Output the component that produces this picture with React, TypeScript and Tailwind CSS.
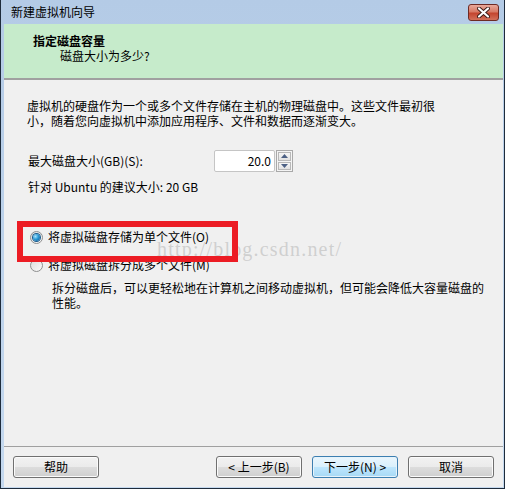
import React from "react";

const cjk = { fontFamily: '"Noto Sans CJK SC", "Liberation Sans", sans-serif' };

const Radio = ({ checked }: { checked?: boolean }) => (
  <span className="relative inline-flex h-[13px] w-[13px] shrink-0 items-center justify-center rounded-full border border-[#8e8f8f] bg-gradient-to-br from-[#dcdcdc] to-[#fbfbfb]">
    {checked && (
      <span className="h-[7px] w-[7px] rounded-full bg-[radial-gradient(circle_at_35%_35%,#a9e3fb_0%,#2a9ad6_45%,#0d4f8a_100%)] shadow-[0_0_0_1px_#1a5a8c]" />
    )}
  </span>
);

const Btn = ({ label, primary }: { label: string; primary?: boolean }) => (
  <button
    className={
      "flex h-[22px] w-[86px] items-center justify-center rounded-[3px] border text-[12px] leading-none text-black " +
      (primary
        ? "border-[#3c7fb1] bg-[linear-gradient(#eaf6fd_0%,#d9f0fc_50%,#bee6fd_50%,#a7d9f5_100%)] shadow-[inset_0_0_0_1px_#e6f3fb]"
        : "border-[#707070] bg-[linear-gradient(#f2f2f2_0%,#ebebeb_50%,#dddddd_50%,#cfcfcf_100%)] shadow-[inset_0_0_0_1px_#fbfbfb]")
    }
    style={cjk}
  >
    {label}
  </button>
);

export default function App() {
  return (
    <div className="w-[505px] h-[489px] overflow-hidden bg-[#1e2c3c] pl-px pr-px pb-px">
      <div className="flex h-full flex-col bg-[linear-gradient(#b4cbe6,#c5d9ef)] pl-[3px] pr-px pb-px">
        {/* title bar */}
        <div className="relative flex h-[24px] shrink-0 items-center pl-[7px]">
          <span className="text-[12px] leading-none text-black" style={cjk}>
            新建虚拟机向导
          </span>
          <div className="absolute right-[4px] top-[4px] flex h-[17px] w-[31px] items-center justify-center rounded-[3px] border border-[#6e2a24] bg-[linear-gradient(#e9a99b_0%,#d77a66_45%,#c4452f_55%,#d2705a_100%)]">
            <svg width="13" height="11" viewBox="0 0 13 11">
              <path d="M2 1.5 L11 9.5 M11 1.5 L2 9.5" stroke="#3a1a16" strokeWidth="4" strokeLinecap="round" />
              <path d="M2 1.5 L11 9.5 M11 1.5 L2 9.5" stroke="#ffffff" strokeWidth="2.2" strokeLinecap="round" />
            </svg>
          </div>
        </div>

        {/* client area */}
        <div className="flex flex-1 flex-col bg-[#f0f0f0] text-black" style={cjk}>
          <div className="h-[56px] shrink-0 border-b-2 border-[#a0a0a0] bg-[#c6ebcb] pl-[29px] pt-[9px]">
            <div className="text-[12px] font-bold leading-[15px]">指定磁盘容量</div>
            <div className="pl-[27px] text-[12px] leading-[15px]">磁盘大小为多少?</div>
          </div>

          <div className="relative flex flex-1 flex-col pl-[23px]">
            <div className="pt-[18px] text-[12px] leading-[15px]">
              <div>虚拟机的硬盘作为一个或多个文件存储在主机的物理磁盘中。这些文件最初很</div>
              <div>小，随着您向虚拟机中添加应用程序、文件和数据而逐渐变大。</div>
            </div>

            <div className="mt-[22px] flex h-[22px] items-center">
              <span className="w-[187px] pl-px text-[12px] leading-none">最大磁盘大小(GB)(S):</span>
              <div className="flex h-[22px] w-[61px] items-center justify-end rounded-[2px] border border-[#c5c5c5] bg-white pr-[3px] text-[12px]">
                20.0
              </div>
              <div className="ml-[1px] flex h-[22px] w-[17px] flex-col gap-px border border-[#a9a9a9] bg-[#f4f4f4] p-px">
                <div className="flex flex-1 items-center justify-center border border-[#b8b8b8] bg-[linear-gradient(#f6f6f6,#e2e2e2)]">
                  <svg width="7" height="4" viewBox="0 0 7 4"><path d="M0 4 L3.5 0 L7 4 Z" fill="#4d6185" /></svg>
                </div>
                <div className="flex flex-1 items-center justify-center border border-[#b8b8b8] bg-[linear-gradient(#f6f6f6,#e2e2e2)]">
                  <svg width="7" height="4" viewBox="0 0 7 4"><path d="M0 0 L3.5 4 L7 0 Z" fill="#4d6185" /></svg>
                </div>
              </div>
            </div>

            <div className="mt-[7px] pl-px text-[12px] leading-[15px]">针对 Ubuntu 的建议大小: 20 GB</div>

            <div className="mt-[35px] flex h-[16px] items-center gap-[5px] pl-[3px] text-[12px] leading-none">
              <Radio checked />
              <span>将虚拟磁盘存储为单个文件(O)</span>
            </div>
            <div className="mt-[12px] flex h-[16px] items-center gap-[5px] pl-[3px] text-[12px] leading-none">
              <Radio />
              <span>将虚拟磁盘拆分成多个文件(M)</span>
            </div>
            <div className="mt-[7px] pl-[25px] text-[12px] leading-[15px]">
              <div>拆分磁盘后，可以更轻松地在计算机之间移动虚拟机，但可能会降低大容量磁盘的</div>
              <div>性能。</div>
            </div>

            {/* watermark + annotation */}
            <span
              className="pointer-events-none absolute left-[153px] top-[159px] text-[20px] leading-none tracking-[1.2px] text-[#b9b9b9]/60"
              style={{ fontFamily: '"Liberation Serif", serif' }}
            >
              http://blog.csdn.net/
            </span>
            <div className="pointer-events-none absolute left-[13px] top-[141px] h-[41px] w-[221px] border-[6px] border-[#ec1c24]" />
          </div>

          <div className="flex h-[41px] shrink-0 items-start justify-between border-t border-[#a0a0a0] pl-[9px] pr-[9px] pt-[9px]">
            <Btn label="帮助" />
            <div className="flex gap-[10px]">
              <Btn label="< 上一步(B)" />
              <Btn label="下一步(N) >" primary />
              <Btn label="取消" />
            </div>
          </div>
        </div>
      </div>
    </div>
  );
}
